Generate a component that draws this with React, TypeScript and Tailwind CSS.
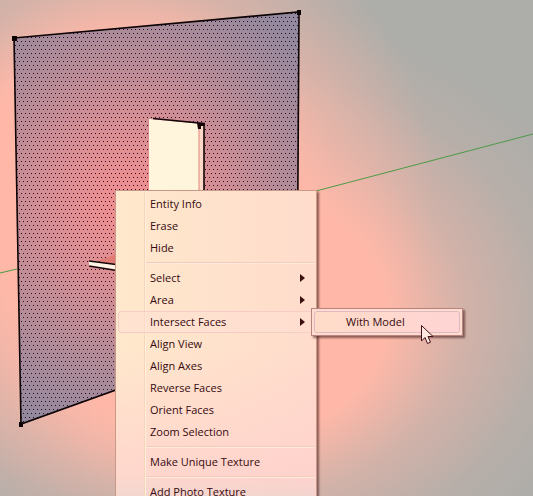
type Entry = { label: string; submenu?: string[] };

const groups: Entry[][] = [
  [{ label: 'Entity Info' }, { label: 'Erase' }, { label: 'Hide' }],
  [
    { label: 'Select', submenu: [] },
    { label: 'Area', submenu: [] },
    { label: 'Intersect Faces', submenu: ['With Model'] },
    { label: 'Align View' },
    { label: 'Align Axes' },
    { label: 'Reverse Faces' },
    { label: 'Orient Faces' },
    { label: 'Zoom Selection' },
  ],
  [{ label: 'Make Unique Texture' }],
  [{ label: 'Add Photo Texture' }],
];

function Scene() {
  return (
    <svg className="absolute inset-0" width="533" height="496" viewBox="0 0 533 496" aria-hidden="true">
      <defs>
        <radialGradient id="wall" gradientUnits="userSpaceOnUse" cx="130" cy="205" r="235">
          <stop offset="0" stopColor="#f48e8e" />
          <stop offset="0.3" stopColor="#dc8f92" />
          <stop offset="0.65" stopColor="#b48c96" />
          <stop offset="1" stopColor="#92899c" />
        </radialGradient>
        <pattern id="dots" width="4" height="8" patternUnits="userSpaceOnUse">
          <rect x="1" y="1" width="1" height="1" fill="#2a0838" />
          <rect x="3" y="5" width="1" height="1" fill="#2a0838" />
        </pattern>
      </defs>

      {/* green axis */}
      <path d="M0 273 L17 269 M316 191 L533 134" stroke="#4c9a46" fill="none" />

      {/* selected wall face */}
      <path d="M14 38 L299 12 L297 325 L21 424 Z" fill="url(#wall)" />
      <path d="M14 38 L299 12 L297 325 L21 424 Z" fill="url(#dots)" shapeRendering="crispEdges" />
      <path d="M14 38 L299 12 L297 325 L21 424 Z" fill="none" stroke="#0c0204" strokeWidth="1.6" />
      <path d="M12 36h5v5h-5z M297 10h4v5h-4z M19 422h4v5h-4z" fill="#0c0204" />

      {/* door opening */}
      <path d="M149 119 L204 124 V200 H149 Z" fill="#fff4dc" />
      <path d="M199 125h5v75h-5z" fill="#ffd8c8" />
      <path d="M199 125v75" stroke="#e08880" />
      <path d="M153 118.500 L204 123.500 V200" stroke="#140406" strokeWidth="1.6" fill="none" />
      <path d="M197 123h8v3h-4v3h-3z" fill="#140406" />

      {/* ledge */}
      <path d="M97 261 L120 253 V265 Z" fill="#e07c74" />
      <path d="M89 261 L120 265 V271 L89 266 Z" fill="#fff4e4" />
      <path d="M89 261 L120 265 M89 266 L120 271" stroke="#140406" strokeWidth="1.4" />
    </svg>
  );
}

function Submenu({ items }: { items: string[] }) {
  return (
    <ul className="absolute -top-[3px] left-full z-10 -ml-[5px] w-[152px] border border-[#b88480] bg-[#ffdcd0] p-0.5 shadow-[2px_2px_2px_rgba(70,30,30,0.6)]">
      {items.map((item) => (
        <li key={item} className="flex">
          <button
            type="button"
            className="flex h-[22px] flex-1 items-center rounded-[3px] border border-[#e0b8c0] bg-linear-to-r from-[#ffdcc8] to-[#ffd4d4] pl-[31px]"
          >
            {item}
          </button>
        </li>
      ))}
    </ul>
  );
}

function MenuItem({ label, submenu }: Entry) {
  const open = !!submenu?.length;
  return (
    <li className="relative flex px-0.5">
      <button
        type="button"
        aria-haspopup={submenu ? 'menu' : undefined}
        aria-expanded={submenu ? open : undefined}
        className={`flex h-[22px] flex-1 items-center justify-between rounded-[3px] border pl-[31px] pr-2 text-left ${
          open ? 'border-[#f6ccc4] bg-[#ffe0d4]/50' : 'border-transparent'
        }`}
      >
        {label}
        {submenu && (
          <svg width="5" height="8" viewBox="0 0 5 8" aria-hidden="true">
            <path d="M0 0 L5 4 L0 8 Z" fill="#3a1010" />
          </svg>
        )}
      </button>
      {open && <Submenu items={submenu} />}
    </li>
  );
}

function ContextMenu() {
  return (
    <nav className="relative flex w-[202px] shrink-0 flex-col border border-[#c89888] bg-[linear-gradient(to_bottom,transparent_50%,rgba(255,204,205,0.6)_90%,rgba(235,210,208,0.8)),linear-gradient(to_right,#ffe8cc,#ffdccc)] py-0.5 shadow-[2px_2px_2px_rgba(70,30,30,0.6)]">
      {/* icon gutter */}
      <div className="absolute inset-y-0.5 left-7 w-0.5 border-l border-[#f8d4bc] bg-[#fff0dc]" />
      {groups.map((group, i) => (
        <div key={i} className="relative flex flex-col">
          {i > 0 && (
            <div className="flex h-2 items-center pl-[30px] pr-0.5">
              <hr className="h-0.5 flex-1 border-t border-[#f4ccbc] bg-[#ffeadc]" />
            </div>
          )}
          <ul className="flex flex-col">
            {group.map((item) => (
              <MenuItem key={item.label} {...item} />
            ))}
          </ul>
        </div>
      ))}
    </nav>
  );
}

export default function App() {
  return (
    <main className="relative flex h-screen items-start overflow-hidden bg-[#adada9] bg-[radial-gradient(circle_at_125px_190px,#ffb8a8_0px,#ffb8a8_150px,rgba(255,184,168,0.5)_210px,rgba(255,184,168,0)_310px),radial-gradient(360px_280px_at_220px_315px,#ffb8a8_0%,#ffb8a8_46%,rgba(255,184,168,0.45)_68%,rgba(255,184,168,0.12)_90%,rgba(255,184,168,0)_110%)] pl-[115px] pt-[190px] font-['Open_Sans','Noto_Sans',sans-serif] text-[11px] text-[#380a10]">
      <Scene />
      <ContextMenu />

      {/* mouse pointer */}
      <svg className="absolute left-[421px] top-[325px] z-20" width="13" height="20" viewBox="0 0 13 20" aria-hidden="true">
        <path
          d="M0.500 0.500 V16 L4 12.500 L6.500 18.500 L9.500 17.200 L7 11.500 H12 Z"
          fill="#ffe8e0"
          stroke="#401018"
        />
      </svg>
    </main>
  );
}
